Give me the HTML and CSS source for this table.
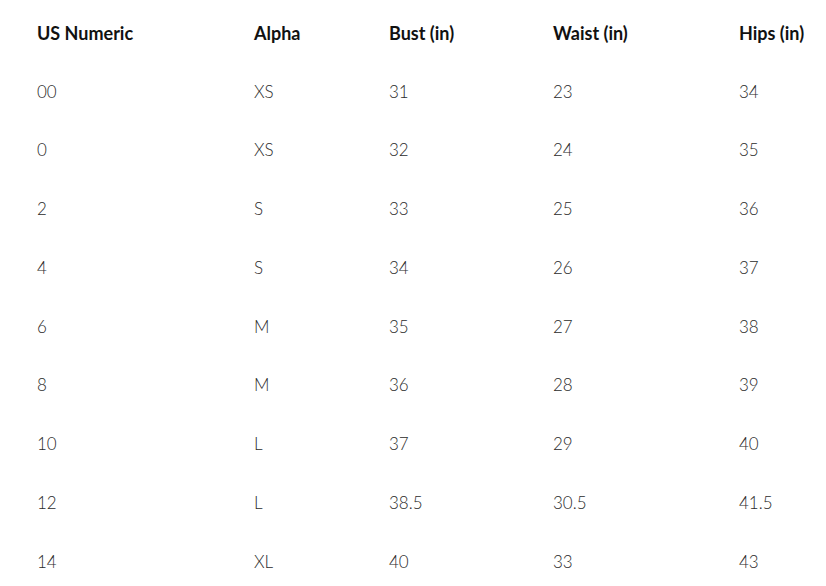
FILE: index.html
```html
<!DOCTYPE html>
<html>
<head>
<meta charset="utf-8">
<link rel="stylesheet" href="styles.css">
</head>
<body>
<div class="chart">
  <div class="row head">
    <div class="cell">US Numeric</div><div class="cell">Alpha</div><div class="cell">Bust (in)</div><div class="cell">Waist (in)</div><div class="cell">Hips (in)</div>
  </div>
  <div class="row"><div class="cell">00</div><div class="cell">XS</div><div class="cell">31</div><div class="cell">23</div><div class="cell">34</div></div>
  <div class="row"><div class="cell">0</div><div class="cell">XS</div><div class="cell">32</div><div class="cell">24</div><div class="cell">35</div></div>
  <div class="row"><div class="cell">2</div><div class="cell">S</div><div class="cell">33</div><div class="cell">25</div><div class="cell">36</div></div>
  <div class="row"><div class="cell">4</div><div class="cell">S</div><div class="cell">34</div><div class="cell">26</div><div class="cell">37</div></div>
  <div class="row"><div class="cell">6</div><div class="cell">M</div><div class="cell">35</div><div class="cell">27</div><div class="cell">38</div></div>
  <div class="row"><div class="cell">8</div><div class="cell">M</div><div class="cell">36</div><div class="cell">28</div><div class="cell">39</div></div>
  <div class="row"><div class="cell">10</div><div class="cell">L</div><div class="cell">37</div><div class="cell">29</div><div class="cell">40</div></div>
  <div class="row"><div class="cell">12</div><div class="cell">L</div><div class="cell">38.5</div><div class="cell">30.5</div><div class="cell">41.5</div></div>
  <div class="row"><div class="cell">14</div><div class="cell">XL</div><div class="cell">40</div><div class="cell">33</div><div class="cell">43</div></div>
</div>
</body>
</html>
```
FILE: styles.css
```css
html, body {
  margin: 0;
  padding: 0;
  background: #ffffff;
}
body {
  font-family: "Lato", "Open Sans", sans-serif;
  font-size: 17px;
  color: #2b2b2b;
  overflow: hidden;
}
.chart {
  padding: 3.4px 0 0 37px;
  white-space: nowrap;
}
.row {
  display: grid;
  grid-template-columns: 217px 135px 164px 186px 120px;
  height: 58.78px;
  align-items: center;
}
.cell {
  line-height: 20px;
  font-weight: 300;
}
.head .cell {
  font-size: 18px;
  font-weight: 700;
  color: #111111;
}
```
